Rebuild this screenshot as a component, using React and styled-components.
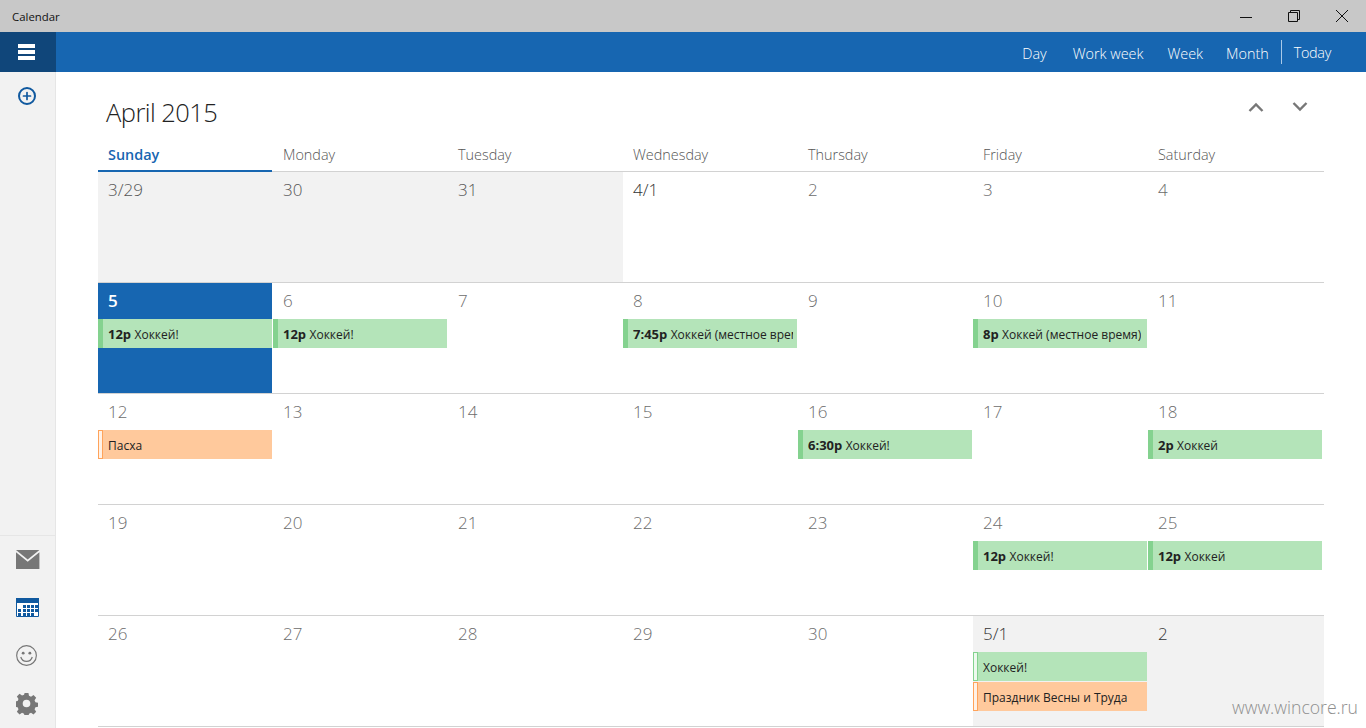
import React from 'react'
import styled, { createGlobalStyle } from 'styled-components'
import { Plus } from 'lucide-react'

const GlobalStyle = createGlobalStyle`
    html, body {
        margin: 0;
        height: 100%;
        overflow: hidden;
        background: #fff;
        font-family: "Open Sans", "Noto Sans", "Liberation Sans", sans-serif;
    }
`

const blue = '#1766b1'

const weekDays = ['Sunday', 'Monday', 'Tuesday', 'Wednesday', 'Thursday', 'Friday', 'Saturday']
const views = [
    { label: 'Day', gap: 26 },
    { label: 'Work week', gap: 24 },
    { label: 'Week', gap: 23 },
    { label: 'Month', gap: 12 },
]

const green = 'green'
const orange = 'orange'

const weeks = [
    [
        { label: '3/29', muted: true },
        { label: '30', muted: true },
        { label: '31', muted: true },
        { label: '4/1', strong: true },
        { label: '2' },
        { label: '3' },
        { label: '4' },
    ],
    [
        { label: '5', today: true, events: [{ time: '12p', title: 'Хоккей!', tone: green }] },
        { label: '6', events: [{ time: '12p', title: 'Хоккей!', tone: green }] },
        { label: '7' },
        { label: '8', events: [{ time: '7:45p', title: 'Хоккей (местное время)', tone: green }] },
        { label: '9' },
        { label: '10', events: [{ time: '8p', title: 'Хоккей (местное время)', tone: green }] },
        { label: '11' },
    ],
    [
        { label: '12', events: [{ title: 'Пасха', tone: orange, allDay: true }] },
        { label: '13' },
        { label: '14' },
        { label: '15' },
        { label: '16', events: [{ time: '6:30p', title: 'Хоккей!', tone: green }] },
        { label: '17' },
        { label: '18', events: [{ time: '2p', title: 'Хоккей', tone: green }] },
    ],
    [
        { label: '19' },
        { label: '20' },
        { label: '21' },
        { label: '22' },
        { label: '23' },
        { label: '24', events: [{ time: '12p', title: 'Хоккей!', tone: green }] },
        { label: '25', events: [{ time: '12p', title: 'Хоккей', tone: green }] },
    ],
    [
        { label: '26' },
        { label: '27' },
        { label: '28' },
        { label: '29' },
        { label: '30' },
        {
            label: '5/1',
            muted: true,
            strong: true,
            events: [
                { title: 'Хоккей!', tone: green, allDay: true },
                { title: 'Праздник Весны и Труда', tone: orange, allDay: true },
            ],
        },
        { label: '2', muted: true, strong: true },
    ],
]

export default function App() {
    return (
        <Page>
            <GlobalStyle />
            <TitleBar>
                <AppName>Calendar</AppName>
                <WindowButtons>
                    <WindowButton>
                        <svg width="14" height="14" viewBox="0 0 14 14">
                            <path d="M1 8.500h12" stroke="#111" fill="none" />
                        </svg>
                    </WindowButton>
                    <WindowButton>
                        <svg width="14" height="14" viewBox="0 0 14 14">
                            <path d="M1.500 3.500h9v9h-9zM3.500 3.500v-2h9v9h-2" stroke="#111" fill="none" />
                        </svg>
                    </WindowButton>
                    <WindowButton>
                        <svg width="14" height="14" viewBox="0 0 14 14">
                            <path d="M1 1l12 12M13 1L1 13" stroke="#111" fill="none" />
                        </svg>
                    </WindowButton>
                </WindowButtons>
            </TitleBar>
            <NavBar>
                <MenuButton>
                    <svg width="17" height="16" viewBox="0 0 17 16">
                        <path d="M0 0h17v4H0zM0 6h17v4H0zM0 12h17v4H0z" fill="#fff" />
                    </svg>
                </MenuButton>
                <ViewSwitch>
                    {views.map((view) => (
                        <ViewLink key={view.label} $gap={view.gap}>
                            {view.label}
                        </ViewLink>
                    ))}
                    <TodayLink>Today</TodayLink>
                </ViewSwitch>
            </NavBar>
            <Body>
                <Sidebar>
                    <AddButton>
                        <Plus size={12} strokeWidth={3.4} color="#10599f" />
                    </AddButton>
                    <SideApps>
                        <SideIcon>
                            <svg width="24" height="22" viewBox="0 -1 24 22">
                                <path d="M0 0h23.400L11.700 9.500z" fill="#777" />
                                <path d="M0 2.200v16.800h23.400V2.200L11.700 11.800z" fill="#777" />
                            </svg>
                        </SideIcon>
                        <SideIcon>
                            <svg width="24" height="22" viewBox="0 -1 24 22">
                                <path d="M.5.5h22v18H.5z" fill="#fff" stroke="#10599f" />
                                <path d="M0 0h23v5H0z" fill="#10599f" />
                                <path
                                    d="M7 7h3v3H7zM11 7h3v3h-3zM15 7h3v3h-3zM19 7h3v3h-3zM2 11h3v3H2zM7 11h3v3H7zM11 11h3v3h-3zM15 11h3v3h-3zM19 11h3v3h-3zM2 15h3v3H2zM7 15h3v3H7zM11 15h3v3h-3zM15 15h3v3h-3z"
                                    fill="#10599f"
                                />
                            </svg>
                        </SideIcon>
                        <SideIcon>
                            <svg width="22" height="22" viewBox="0 0 23 23" fill="none" stroke="#777">
                                <circle cx="11" cy="11" r="10.300" strokeWidth="1.200" />
                                <circle cx="7.500" cy="8.500" r="1.500" fill="#777" stroke="none" />
                                <circle cx="14.500" cy="8.500" r="1.500" fill="#777" stroke="none" />
                                <path d="M5 12.500c1 3.200 3.600 4.600 6 4.600s5-1.400 6-4.600" strokeWidth="1.300" />
                            </svg>
                        </SideIcon>
                        <SideIcon>
                            <svg width="22" height="22" viewBox="0 0 23 23">
                                <path
                                    fill="#777"
                                    fillRule="evenodd"
                                    d="M9 0h4l.6 3 2.100.9 2.600-1.700 2.800 2.800-1.700 2.600.9 2.100 3 .6v4l-3 .6-.9 2.100 1.700 2.600-2.800 2.800-2.600-1.700-2.100.9-.6 3H9l-.6-3-2.100-.9-2.600 1.700-2.800-2.800 1.700-2.600-.9-2.100-3-.6V9l3-.6.900-2.100L.9 3.700 3.700.9 6.300 2.600 8.400 1.700zM11 7a4 4 0 1 0 0 8 4 4 0 0 0 0-8z"
                                />
                            </svg>
                        </SideIcon>
                    </SideApps>
                </Sidebar>
                <Main>
                    <MonthHeader>
                        <MonthTitle>April 2015</MonthTitle>
                        <MonthArrows>
                            <svg width="16" height="10" viewBox="0 0 16 10">
                                <path d="M1.500 9L8 2.500 14.500 9" stroke="#777" strokeWidth="2.400" fill="none" />
                            </svg>
                            <svg width="16" height="10" viewBox="0 0 16 10">
                                <path d="M1.500 1L8 7.500 14.500 1" stroke="#777" strokeWidth="2.400" fill="none" />
                            </svg>
                        </MonthArrows>
                    </MonthHeader>
                    <WeekHeader>
                        {weekDays.map((day, i) => (
                            <WeekDay key={day} $active={i === 0}>
                                {day}
                            </WeekDay>
                        ))}
                    </WeekHeader>
                    {weeks.map((week, w) => (
                        <WeekRow key={w}>
                            {week.map((day) => (
                                <DayCell key={day.label} $muted={day.muted} $today={day.today}>
                                    <DayNumber $strong={day.strong} $muted={day.muted} $today={day.today}>
                                        {day.label}
                                    </DayNumber>
                                    <EventList>
                                        {(day.events || []).map((ev) => (
                                            <EventChip key={ev.title} $tone={ev.tone} $allDay={ev.allDay}>
                                                <EventText>
                                                    {ev.time && <b>{ev.time} </b>}
                                                    {ev.title}
                                                </EventText>
                                            </EventChip>
                                        ))}
                                    </EventList>
                                </DayCell>
                            ))}
                        </WeekRow>
                    ))}
                </Main>
            </Body>
            <Watermark>www.wincore.ru</Watermark>
        </Page>
    )
}

const Page = styled.div`
    position: relative;
    width: 1366px;
    height: 728px;
    overflow: hidden;
    display: flex;
    flex-direction: column;
`

const TitleBar = styled.div`
    height: 32px;
    background: #c8c8c8;
    display: flex;
    align-items: center;
    justify-content: space-between;
    flex-shrink: 0;
`

const AppName = styled.div`
    margin-left: 12px;
    font-size: 11.4px;
    color: #111;
`

const WindowButtons = styled.div`
    display: flex;
`

const WindowButton = styled.div`
    width: 48px;
    height: 32px;
    display: flex;
    align-items: center;
    justify-content: center;
`

const NavBar = styled.div`
    height: 40px;
    background: ${blue};
    display: flex;
    justify-content: space-between;
    flex-shrink: 0;
`

const MenuButton = styled.div`
    width: 53px;
    padding-right: 3px;
    background: #10467a;
    display: flex;
    align-items: center;
    justify-content: center;
`

const ViewSwitch = styled.div`
    display: flex;
    align-items: center;
    padding-right: 35px;
    color: #fff;
    font-size: 14.4px;
    font-weight: 300;
`

const ViewLink = styled.span`
    margin: 2px ${(p) => p.$gap}px 0 0;
`

const TodayLink = styled.div`
    border-left: 1px solid #a9c9e8;
    height: 24px;
    line-height: 26px;
    padding-left: 12px;
    letter-spacing: -0.3px;
`

const Body = styled.div`
    flex: 1;
    display: flex;
    min-height: 0;
`

const Sidebar = styled.div`
    width: 55px;
    background: #f2f2f2;
    border-right: 1px solid #e6e6e6;
    display: flex;
    flex-direction: column;
    justify-content: space-between;
`

const AddButton = styled.div`
    width: 14px;
    height: 14px;
    margin: 15px 0 0 18px;
    border: 2px solid #10599f;
    border-radius: 50%;
    display: flex;
    align-items: center;
    justify-content: center;
`

const SideApps = styled.div`
    border-top: 1px solid #e6e6e6;
`

const SideIcon = styled.div`
    height: 48px;
    padding-left: 16px;
    display: flex;
    align-items: center;
`

const Main = styled.div`
    padding-left: 42px;
    width: 1226px;
`

const MonthHeader = styled.div`
    height: 72px;
    display: flex;
    justify-content: space-between;
`

const MonthTitle = styled.div`
    margin: 22px 0 0 8px;
    font-size: 25.5px;
    line-height: 36px;
    font-weight: 300;
    letter-spacing: -0.55px;
    color: #222;
`

const MonthArrows = styled.div`
    display: flex;
    gap: 28px;
    margin: 30px 16px 0 0;
`

const WeekHeader = styled.div`
    display: grid;
    grid-template-columns: repeat(6, 175px) 176px;
    height: 27px;
    border-bottom: 1px solid #d2d2d2;
`

const WeekDay = styled.div`
    padding-left: 10px;
    margin-right: 1px;
    font-size: 14.4px;
    line-height: 22px;
    font-weight: ${(p) => (p.$active ? 600 : 300)};
    color: ${(p) => (p.$active ? blue : '#555')};
    height: 26px;
    border-bottom: ${(p) => (p.$active ? `2px solid ${blue}` : 'none')};
`

const WeekRow = styled.div`
    display: grid;
    grid-template-columns: repeat(6, 175px) 176px;
    height: 110px;
    border-bottom: 1px solid #d2d2d2;
`

const DayCell = styled.div`
    background: ${(p) => (p.$muted ? '#f2f2f2' : 'transparent')};
    min-width: 0;
    ${(p) => p.$today && `background: ${blue}; margin-right: 1px;`}
`

const numberColor = (p) => {
    if (p.$today) return '#fff'
    if (p.$strong) return '#333'
    return p.$muted ? '#555' : '#6c6c6c'
}

const DayNumber = styled.div`
    height: 36px;
    padding-left: 10px;
    font-size: 17px;
    line-height: 35px;
    font-weight: ${(p) => (p.$today ? 600 : 300)};
    color: ${numberColor};
`

const EventList = styled.div`
    display: flex;
    flex-direction: column;
    gap: 1px;
`

const toneColors = {
    green: { bg: '#b4e4b9', bar: '#84d28f', inner: '#eef9ef' },
    orange: { bg: '#ffc99c', bar: '#ffa35a', inner: '#fff1e6' },
}

const EventChip = styled.div`
    width: 174px;
    height: 29px;
    display: flex;
    align-items: center;
    background: ${(p) => toneColors[p.$tone].bg};
    &::before {
        content: '';
        flex-shrink: 0;
        width: 5px;
        height: 29px;
        box-sizing: border-box;
        background: ${(p) => (p.$allDay ? toneColors[p.$tone].inner : toneColors[p.$tone].bar)};
        border: 1px solid ${(p) => toneColors[p.$tone].bar};
    }
`

const EventText = styled.div`
    margin: 2px 4px 0 5px;
    font-size: 12px;
    line-height: 18px;
    color: #222;
    white-space: nowrap;
    overflow: hidden;
    b {
        font-size: 13px;
        font-weight: 700;
        line-height: 1;
    }
`

const Watermark = styled.div`
    position: absolute;
    right: 8px;
    bottom: 9px;
    font-size: 17.6px;
    font-weight: 300;
    color: #8e8e8e;
`
